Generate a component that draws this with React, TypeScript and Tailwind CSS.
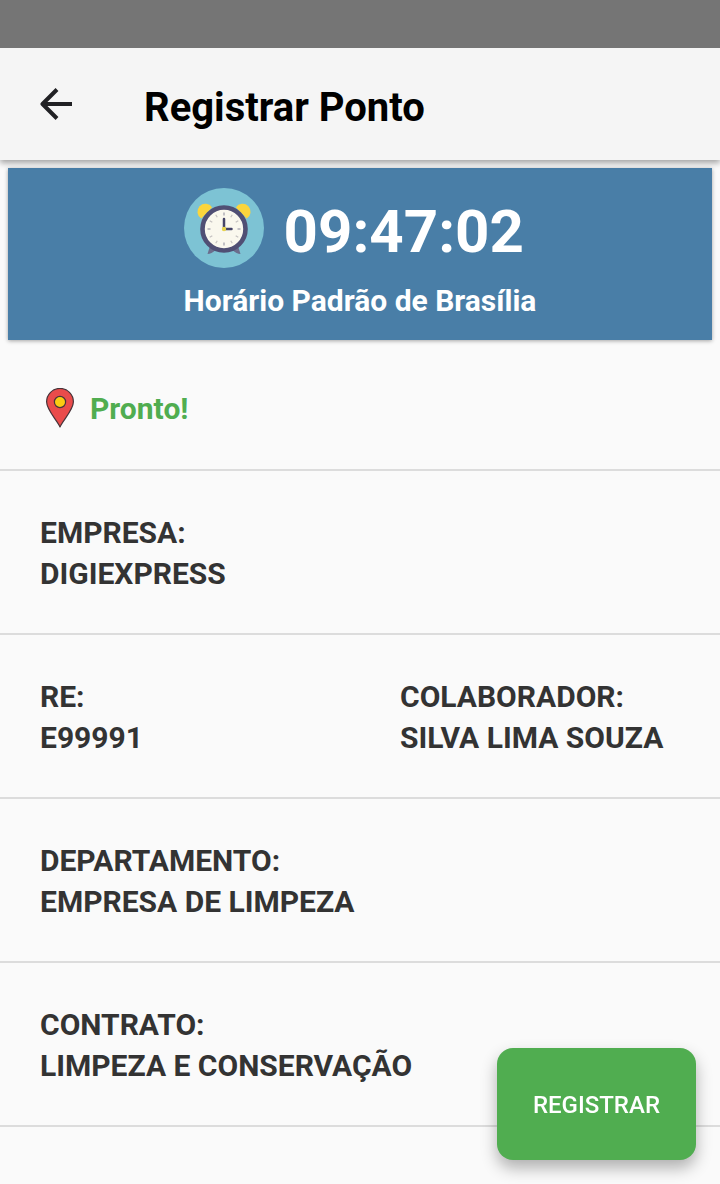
type Field = {
  label: string;
  value: string;
};

const rows: Field[][] = [
  [{ label: "EMPRESA:", value: "DIGIEXPRESS" }],
  [
    { label: "RE:", value: "E99991" },
    { label: "COLABORADOR:", value: "SILVA LIMA SOUZA" },
  ],
  [{ label: "DEPARTAMENTO:", value: "EMPRESA DE LIMPEZA" }],
  [{ label: "CONTRATO:", value: "LIMPEZA E CONSERVAÇÃO" }],
];

const ticks = [0, 30, 60, 90, 120, 150, 180, 210, 240, 270, 300, 330];

function BackIcon() {
  return (
    <svg viewBox="0 0 32 32" fill="none" stroke="#212124" strokeWidth={4} className="size-8">
      <path d="M32 16H3" />
      <path d="M17 1.500 2.500 16 17 30.500" strokeLinejoin="round" />
    </svg>
  );
}

function ClockIcon() {
  return (
    <svg viewBox="0 0 80 80" className="size-20 shrink-0" aria-hidden="true">
      <circle cx="40" cy="40" r="40" fill="#7dc3d4" />
      <path d="M26 58 23.500 66q4 0 8-4zM54 58l2.500 8q-4 0-8-4z" fill="#6b6d8c" />
      <path d="M17.300 30.500A7.900 7.900 0 1 1 28 19.500z" fill="#fbd53c" />
      <path d="M62.700 30.500A7.900 7.900 0 1 0 52 19.500z" fill="#fbd53c" />
      <circle cx="40" cy="41" r="21.500" fill="#faf8ee" stroke="#504f74" strokeWidth="4.600" />
      {ticks.map((angle) => (
        <path
          key={angle}
          d="M40 24.500v3"
          stroke={angle % 90 === 0 ? "#9d9ca8" : "#c4c2c0"}
          strokeWidth="1.200"
          transform={`rotate(${angle} 40 41)`}
        />
      ))}
      <path d="M40 41V31M40 41h7.500" stroke="#454468" strokeWidth="2.500" strokeLinecap="round" />
      <circle cx="40" cy="41" r="2.200" fill="#e8d44c" />
    </svg>
  );
}

function PinIcon() {
  return (
    <svg viewBox="0 0 40 40" className="size-10 shrink-0" aria-hidden="true">
      <path
        d="M20 39C17 32 6.600 22 6.600 13.800a13.400 13.400 0 0 1 26.800 0C33.400 22 23 32 20 39z"
        fill="#ea4b4b"
        stroke="#47343a"
        strokeWidth="1.200"
        strokeLinejoin="round"
      />
      <circle cx="20" cy="14" r="5.600" fill="#fbcb12" stroke="#47343a" strokeWidth="1.200" />
    </svg>
  );
}

export default function App() {
  return (
    <div className="min-h-screen bg-[#fafafa] font-['Roboto',sans-serif] text-[#333333]">
      <div className="relative z-10 h-12 bg-[#757575]" />

      <header className="relative flex h-28 items-center gap-18 bg-[#f5f5f5] px-10 shadow-[0_3px_6px_rgba(0,0,0,0.35)]">
        <button type="button" aria-label="Voltar">
          <BackIcon />
        </button>
        <h1 className="pt-2 text-[40px] leading-12 font-bold text-black">Registrar Ponto</h1>
      </header>

      <main>
        <section className="mx-2 mt-2 flex justify-center bg-[#497ea7] py-5 text-white shadow-[0_1px_4px_rgba(0,0,0,0.35)]">
          <div>
            <div className="flex items-center gap-5">
              <ClockIcon />
              <time className="pt-2 text-[60px] leading-[72px] font-bold">09:47:02</time>
            </div>
            <p className="pt-3.5 text-[30px] leading-[38px] font-bold">Horário Padrão de Brasília</p>
          </div>
        </section>

        <div className="flex items-start gap-2.5 border-b-2 border-[#dcdcdc] px-10 pt-12 pb-[39px]">
          <PinIcon />
          <p role="status" className="text-[30px] leading-[42px] font-bold text-[#50ad50]">
            Pronto!
          </p>
        </div>

        <dl className="text-[30px] leading-[41px] font-bold">
          {rows.map((fields) => (
            <div key={fields[0].label} className="flex border-b-2 border-[#dcdcdc] pt-[41px] pb-[39px]">
              {fields.map((f) => (
                <div key={f.label} className="flex-1 pl-10">
                  <dt>{f.label}</dt>
                  <dd>{f.value}</dd>
                </div>
              ))}
            </div>
          ))}
        </dl>
      </main>

      <button
        type="button"
        className="fixed right-6 bottom-6 h-28 rounded-2xl bg-[#50ad50] px-9 pt-0.5 text-2xl font-medium text-white shadow-[0_8px_16px_rgba(0,0,0,0.3)]"
      >
        REGISTRAR
      </button>
    </div>
  );
}
